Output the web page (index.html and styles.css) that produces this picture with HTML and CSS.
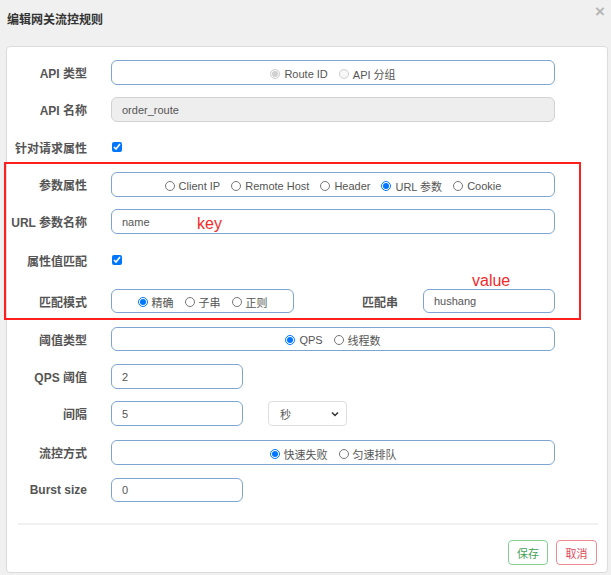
FILE: index.html
```html
<!DOCTYPE html>
<html lang="zh-CN">
<head>
<meta charset="utf-8">
<title>编辑网关流控规则</title>
<link rel="stylesheet" href="styles.css">
</head>
<body>
<div class="dialog">
  <div class="dialog-header">
    <h4 class="dialog-title">编辑网关流控规则</h4>
    <span class="close">×</span>
  </div>
  <div class="panel">
    <form class="form">
      <div class="row">
        <label class="label">API 类型</label>
        <div class="box radios wide">
          <label class="opt"><input type="radio" name="apitype" checked disabled>Route ID</label>
          <label class="opt"><input type="radio" name="apitype" disabled>API 分组</label>
        </div>
      </div>
      <div class="row">
        <label class="label">API 名称</label>
        <div class="box text wide disabled">order_route</div>
      </div>
      <div class="row row-cb">
        <label class="label">针对请求属性</label>
        <input class="cb" type="checkbox" checked>
      </div>
      <div class="row">
        <label class="label">参数属性</label>
        <div class="box radios wide">
          <label class="opt"><input type="radio" name="param">Client IP</label>
          <label class="opt"><input type="radio" name="param">Remote Host</label>
          <label class="opt"><input type="radio" name="param">Header</label>
          <label class="opt"><input type="radio" name="param" checked>URL 参数</label>
          <label class="opt"><input type="radio" name="param">Cookie</label>
        </div>
      </div>
      <div class="row">
        <label class="label">URL 参数名称</label>
        <div class="box text wide annotated">name<span class="note note-key">key</span></div>
      </div>
      <div class="row row-cb2">
        <label class="label">属性值匹配</label>
        <input class="cb" type="checkbox" checked>
      </div>
      <div class="row row-match">
        <label class="label">匹配模式</label>
        <div class="box radios match">
          <label class="opt"><input type="radio" name="mode" checked>精确</label>
          <label class="opt"><input type="radio" name="mode">子串</label>
          <label class="opt"><input type="radio" name="mode">正则</label>
        </div>
        <label class="label label-sub">匹配串</label>
        <div class="box text small annotated">hushang<span class="note note-value">value</span></div>
      </div>
      <div class="row row-thr">
        <label class="label">阈值类型</label>
        <div class="box radios wide">
          <label class="opt"><input type="radio" name="grade" checked>QPS</label>
          <label class="opt"><input type="radio" name="grade">线程数</label>
        </div>
      </div>
      <div class="row">
        <label class="label">QPS 阈值</label>
        <div class="box text small">2</div>
      </div>
      <div class="row row-interval">
        <label class="label">间隔</label>
        <div class="box text small">5</div>
        <div class="select">
          <span>秒</span>
          <svg width="8" height="6" viewBox="0 0 8 6"><path d="M1 1.5 L4 4.5 L7 1.5" fill="none" stroke="#333" stroke-width="1.5"/></svg>
        </div>
      </div>
      <div class="row row-ctrl">
        <label class="label">流控方式</label>
        <div class="box radios wide">
          <label class="opt"><input type="radio" name="behavior" checked>快速失败</label>
          <label class="opt"><input type="radio" name="behavior">匀速排队</label>
        </div>
      </div>
      <div class="row row-last">
        <label class="label">Burst size</label>
        <div class="box text small">0</div>
      </div>
      <div class="highlight"></div>
    </form>
    <div class="footer">
      <button type="button" class="btn btn-save">保存</button>
      <button type="button" class="btn btn-cancel">取消</button>
    </div>
  </div>
</div>
</body>
</html>
```

FILE: styles.css
```css
* { box-sizing: border-box; }

html, body {
  margin: 0;
  padding: 0;
  background: #f0f0f0;
  font-family: "Liberation Sans", "Noto Sans CJK SC", sans-serif;
  color: #555;
}

.dialog {
  width: 611px;
  height: 575px;
  display: flex;
  flex-direction: column;
}

.dialog-header {
  height: 46px;
  display: flex;
  justify-content: space-between;
  align-items: flex-start;
  padding: 0 6px 0 7px;
}

.dialog-title {
  margin: 13px 0 0;
  font-size: 12px;
  line-height: 14px;
  font-weight: bold;
  color: #333;
}

.close {
  margin-top: 3px;
  font-size: 17px;
  line-height: 17px;
  font-weight: bold;
  color: #b5b5b5;
}

.panel {
  margin: 0 3px 2px 6px;
  flex: 1;
  background: #fff;
  border: 1px solid #dcdcdc;
  border-radius: 4px;
  display: flex;
  flex-direction: column;
}

.form {
  position: relative;
  margin: 0;
  padding-top: 13px;
}

.row {
  display: flex;
  align-items: center;
  height: 25px;
  margin-bottom: 12px;
}

.row-cb { height: 26px; }
.row-cb2 { height: 28px; margin-bottom: 15px; }
.row-match { height: 24px; margin-bottom: 14px; }
.row-thr { height: 24px; margin-bottom: 13px; }
.row-interval { margin-bottom: 14px; }
.row-ctrl { margin-bottom: 13px; }
.row-last { height: 24px; margin-bottom: 21px; }

.label {
  width: 80px;
  flex: none;
  margin-right: 24px;
  text-align: right;
  white-space: nowrap;
  font-size: 12px;
  font-weight: bold;
  color: #555;
}

.label-sub {
  width: 104px;
  margin-right: 25px;
}

.box {
  height: 100%;
  border: 1px solid #7ea5d2;
  border-radius: 6px;
  background: #fff;
  font-size: 11px;
  color: #555;
}

.wide { width: 444px; }
.small { width: 132px; }
.match { width: 183px; }

.text {
  display: flex;
  align-items: center;
  padding-left: 10px;
}

.disabled {
  background: #eee;
  border-color: #d2d2d2;
}

.radios {
  display: flex;
  justify-content: center;
  align-items: center;
  gap: 11px;
  padding-top: 2px;
}

.opt {
  display: inline-flex;
  align-items: center;
  white-space: nowrap;
}

.opt input {
  width: 10px;
  height: 10px;
  margin: 0 4px 0 0;
}

.cb {
  width: 10px;
  height: 10px;
  margin: 0 0 0 1px;
}

.select {
  margin-left: 25px;
  width: 79px;
  height: 100%;
  border: 1px solid #dedede;
  border-radius: 4px;
  display: flex;
  justify-content: space-between;
  align-items: center;
  padding: 0 7px 0 11px;
  font-size: 11px;
  color: #555;
}

.annotated { position: relative; }

.note {
  position: absolute;
  font-size: 16px;
  line-height: 18px;
  color: #f52a2a;
  white-space: nowrap;
}

.note-key { left: 85px; top: 5px; }
.note-value { left: 48px; top: -18px; }

.highlight {
  position: absolute;
  left: -3px;
  top: 115px;
  width: 577px;
  height: 158px;
  border: 2px solid #fe1f1f;
  pointer-events: none;
}

.footer {
  margin: 0 9px 0 11px;
  border-top: 2px solid #f1f1f1;
  padding: 15px 1px 0 0;
  display: flex;
  justify-content: flex-end;
  gap: 8px;
}

.btn {
  height: 25px;
  padding: 0;
  background: #fff;
  border-radius: 4px;
  font-family: "Liberation Sans", "Noto Sans CJK SC", sans-serif;
  font-size: 11px;
  white-space: nowrap;
  cursor: pointer;
}

.btn-save {
  width: 40px;
  border: 1px solid #86cf95;
  color: #3fa257;
}

.btn-cancel {
  width: 41px;
  border: 1px solid #ec8a93;
  color: #e2475a;
}
```
